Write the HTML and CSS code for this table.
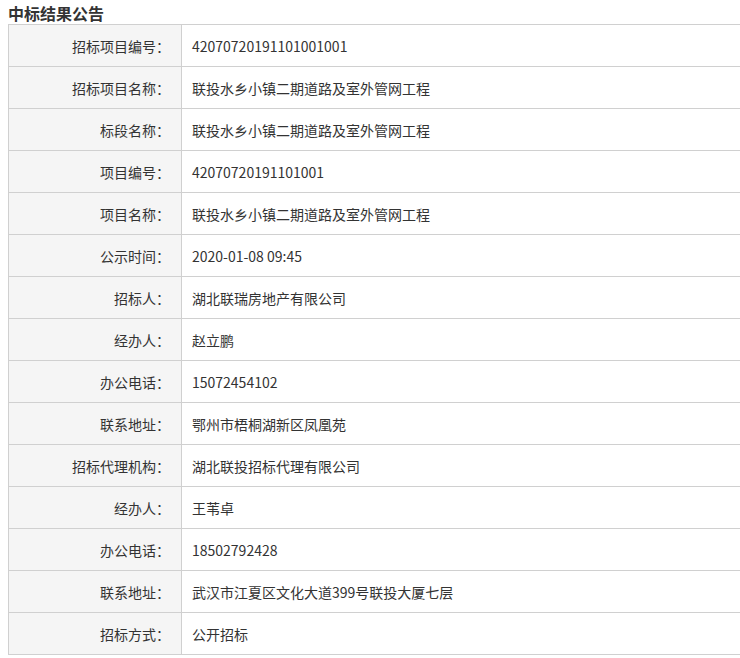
FILE: index.html
```html
<!DOCTYPE html>
<html lang="zh-CN">
<head>
<meta charset="utf-8">
<link rel="stylesheet" href="styles.css">
</head>
<body>
<h3 class="title">中标结果公告</h3>
<table class="info">
<tr><th>招标项目编号<span class="colon">：</span></th><td>42070720191101001001</td></tr>
<tr><th>招标项目名称<span class="colon">：</span></th><td>联投水乡小镇二期道路及室外管网工程</td></tr>
<tr><th>标段名称<span class="colon">：</span></th><td>联投水乡小镇二期道路及室外管网工程</td></tr>
<tr><th>项目编号<span class="colon">：</span></th><td>42070720191101001</td></tr>
<tr><th>项目名称<span class="colon">：</span></th><td>联投水乡小镇二期道路及室外管网工程</td></tr>
<tr><th>公示时间<span class="colon">：</span></th><td>2020-01-08 09:45</td></tr>
<tr><th>招标人<span class="colon">：</span></th><td>湖北联瑞房地产有限公司</td></tr>
<tr><th>经办人<span class="colon">：</span></th><td>赵立鹏</td></tr>
<tr><th>办公电话<span class="colon">：</span></th><td>15072454102</td></tr>
<tr><th>联系地址<span class="colon">：</span></th><td>鄂州市梧桐湖新区凤凰苑</td></tr>
<tr><th>招标代理机构<span class="colon">：</span></th><td>湖北联投招标代理有限公司</td></tr>
<tr><th>经办人<span class="colon">：</span></th><td>王苇卓</td></tr>
<tr><th>办公电话<span class="colon">：</span></th><td>18502792428</td></tr>
<tr><th>联系地址<span class="colon">：</span></th><td>武汉市江夏区文化大道399号联投大厦七层</td></tr>
<tr><th>招标方式<span class="colon">：</span></th><td>公开招标</td></tr>
</table>
</body>
</html>
```
FILE: styles.css
```css
html, body {
  overflow: hidden;
}
body {
  margin: 0;
  padding: 0 0 0 8px;
  font-family: "Microsoft YaHei", "Noto Sans CJK SC", "Liberation Sans", sans-serif;
  color: #333;
  background: #fff;
}
.title {
  margin: 0;
  height: 24px;
  line-height: 26px;
  font-size: 16px;
  font-weight: bold;
  color: #333;
}
.info {
  border-collapse: collapse;
  width: 740px;
  font-size: 14px;
}
.info th,
.info td {
  border: 1px solid #d0d0d0;
  height: 42px;
  padding: 0 10px;
  box-sizing: border-box;
  line-height: 20px;
  font-weight: normal;
  color: #333;
}
.info th {
  width: 173px;
  text-align: right;
  background: #f5f5f5;
  padding-right: 11px;
}
.info td {
  text-align: left;
  padding-left: 10px;
}
.colon {
  font-family: "Noto Sans CJK JP", "Noto Sans CJK SC", sans-serif;
}
```
